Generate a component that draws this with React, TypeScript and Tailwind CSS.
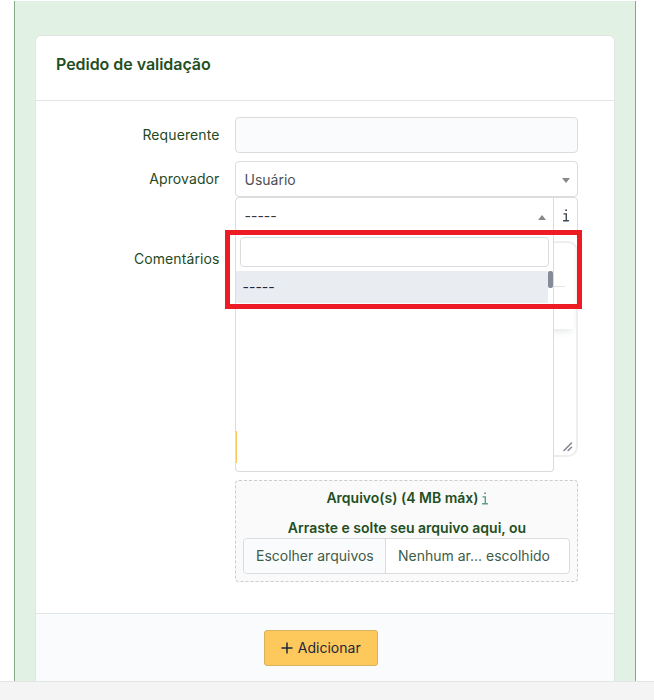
import React from "react";

const InfoGlyph = ({ className }: { className: string }) => (
  <svg viewBox="0 0 6 13" width="6" height="13" className={className} fill="none" stroke="currentColor" strokeWidth="1.4">
    <path d="M2.2 1.2h1.8M0.5 4.9h2.8v6.6M0.1 11.8h5.8" />
  </svg>
);

function Label({ children }: { children: React.ReactNode }) {
  return (
    <label className="w-[183.5px] shrink-0 pt-2 text-right text-[14px] leading-5 tracking-[0.1px] text-[#1f4a1f]">
      {children}
    </label>
  );
}

function Dropdown() {
  return (
    <div className="absolute top-[34px] left-[-1px] z-10 h-[240px] w-[319px] rounded-b border border-t-0 border-[#dadcde] bg-white">
      <div className="px-1 pt-[5px]">
        <input className="block h-[30px] w-[309px] rounded border border-[#dadcde] bg-white outline-none" />
      </div>
      <div className="mt-1 flex h-8">
        <div className="w-[312px] bg-[#e9ecf1] pl-[6.5px] text-[14px] leading-8 text-[#1d273b]">-----</div>
        <div className="h-[17px] w-[5px] rounded-[2px] bg-[#858b97]" />
      </div>
      <div className="mt-32 h-8 border-l border-[#fec95c]" />
    </div>
  );
}

export default function App() {
  return (
    <div className="flex h-[700px] w-[654px] flex-col overflow-hidden bg-white pt-px font-['Inter',sans-serif]">
      <main className="mr-[18px] ml-[14px] h-[680px] border-x border-[#86aa88] bg-[#e1f1e3] px-5 pt-[34px]">
        <section className="flex h-[646px] flex-col rounded-t-md border border-b-0 border-[#e2e5e5] bg-white">
          <header className="h-[65px] border-b border-[#e2e5e8] px-5 pt-4">
            <h1 className="text-[16px] leading-6 font-semibold tracking-[-0.04px] text-[#1f4f1f]">Pedido de validação</h1>
          </header>
          <div className="h-[512px] pt-4">
            <div className="mb-2 flex h-9 gap-[15.5px]">
              <Label>Requerente</Label>
              <div className="w-[343px] rounded border border-[#dadcde] bg-[#fafbfc]" />
            </div>
            <div className="flex h-9 gap-[15.5px]">
              <Label>Aprovador</Label>
              <div className="flex w-[343px] items-center justify-between rounded border border-[#dadcde] pr-[7px] pl-[8.5px] text-[14px] text-[#4b5058]">
                <span>Usuário</span>
                <svg width="8" height="5" className="mt-[3px]"><path d="M0 0h8L4 5z" fill="#888" /></svg>
              </div>
            </div>
            <div className="relative ml-[199px] flex h-9 w-[343px] rounded border border-[#dadcde]">
              <div className="flex w-[318px] items-center justify-between border-r border-[#dadcde] pr-[7px] pl-[8.5px] text-[14px] text-[#30363f]">
                <span>-----</span>
                <svg width="8" height="5" className="mt-[5px]"><path d="M0 5h8L4 0z" fill="#888" /></svg>
              </div>
              <div className="flex flex-1 items-center justify-center pl-px"><InfoGlyph className="text-[#41474f]" /></div>
              <Dropdown />
              <div className="absolute top-[32px] left-[-11px] z-20 h-[79px] w-[357px] border-[5px] border-[#ed1c24]" />
            </div>
            <div className="mt-2 flex h-[216px] gap-[15.5px]">
              <Label>Comentários</Label>
              <div className="relative w-[343px] overflow-hidden rounded-[10px] border-2 border-[#eee] bg-white">
                <div className="mr-[2px] h-[86px] shadow-[0_4px_8px_-3px_rgba(34,47,62,0.16)]">
                  <div className="mr-[9px] h-[44px] border-b border-[#e3e3e3]" />
                </div>
                <svg width="10" height="10" className="absolute right-[3px] bottom-[3px]" stroke="#838894" strokeWidth="1.6" strokeLinecap="round">
                  <path d="M1 8.5L8.5 1M5.2 8.5L8.5 5.3" />
                </svg>
              </div>
            </div>
            <div className="mt-[23px] ml-[199px] h-[102px] w-[343px] rounded border border-dashed border-[#ccc] bg-[#fafafa] px-[7px] pt-[7px] text-center text-[14px] leading-5 font-semibold text-[#1f4f1f]">
              <p className="flex items-center justify-center gap-[3px] pl-px">
                <span>Arquivo(s) (4 MB máx)</span>
                <InfoGlyph className="text-[#579c87]" />
              </p>
              <p className="mt-[10px] pl-px">Arraste e solte seu arquivo aqui, ou</p>
              <div className="flex h-9 rounded border border-[#dadcde] bg-white text-left leading-[34px] font-normal text-[#3f5c48]">
                <span className="w-[142px] rounded-l border-r border-[#dadcde] bg-[#fafbfc] pl-3">Escolher arquivos</span>
                <span className="pl-3">Nenhum ar... escolhido</span>
              </div>
            </div>
          </div>
          <footer className="flex flex-1 justify-center border-t border-[#e2e5e8] bg-[#fafbfd] pt-4">
            <button className="mr-[8px] flex h-9 w-[114px] items-center justify-center gap-[4.5px] rounded-[3px] border border-[#d9b25d] bg-[#fec95c] pb-px text-[14px] text-[#1d273b]">
              <svg width="12" height="12" stroke="currentColor" strokeWidth="1.5"><path d="M6 0.5v11M0.5 6h11" /></svg>
              Adicionar
            </button>
          </footer>
        </section>
      </main>
      <div className="flex-1 border-t border-[#e3e4e4] bg-[#f4f4f4]" />
    </div>
  );
}
